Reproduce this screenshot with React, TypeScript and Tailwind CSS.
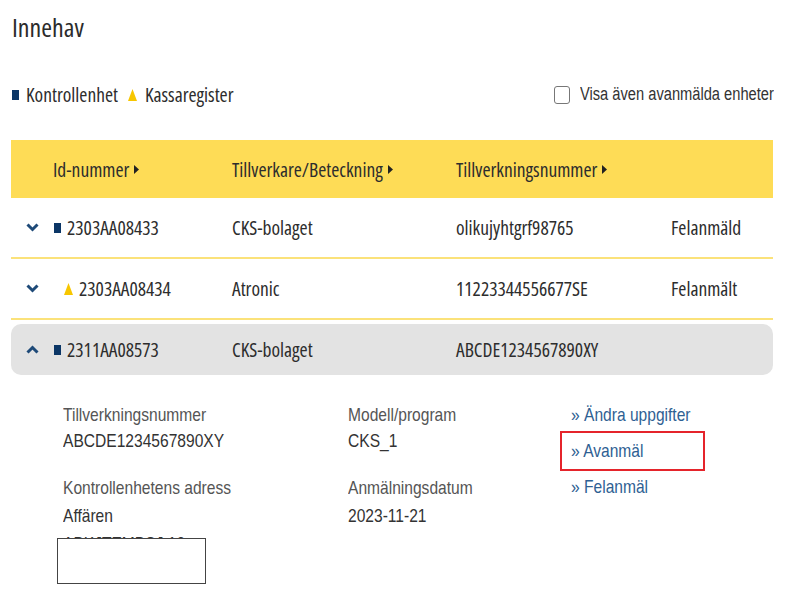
import React from "react";

const Chevron = ({ up }: { up?: boolean }) => (
  <svg width="13" height="9" viewBox="0 0 13 9" className="block">
    <path
      d={up ? "M1.5 7.5 L6.5 2.5 L11.5 7.5" : "M1.5 1.5 L6.5 6.5 L11.5 1.5"}
      fill="none"
      stroke="#1e4a78"
      strokeWidth="3"
    />
  </svg>
);

const Square = () => <span className="inline-block w-[7px] h-[10px] bg-[#0b3666]" />;
const Triangle = () => (
  <svg width="9" height="12" viewBox="0 0 9 12" className="inline-block">
    <path d="M4.5 0 L9 12 L0 12 Z" fill="#f7c600" />
  </svg>
);
const Caret = () => (
  <svg width="5" height="9" viewBox="0 0 5 9" className="inline-block ml-[5px]">
    <path d="M0 0 L5 4.5 L0 9 Z" fill="#222" />
  </svg>
);

const os = "font-['Open_Sans',sans-serif] font-stretch-[75%]";
const ar = "font-['Liberation_Sans',Arial,sans-serif]";

const N = ({ children, c = "" }: { children: React.ReactNode; c?: string }) => (
  <div className={`whitespace-nowrap ${c}`}>
    <span className="inline-block origin-left scale-x-[0.82]">{children}</span>
  </div>
);

export default function App() {
  const rows = [
    { id: "2303AA08433", type: "sq", m: "CKS-bolaget", s: "olikujyhtgrf98765", st: "Felanmäld" },
    { id: "2303AA08434", type: "tri", m: "Atronic", s: "11223344556677SE", st: "Felanmält" },
  ];
  return (
    <div className="w-[795px] h-[590px] bg-white text-[#333] overflow-hidden relative">
      <div className="pl-[12px] pr-[22px]">
        <h1 className={`${os} text-[26px] leading-none pt-[14px] text-[#2b2b2b]`}>Innehav</h1>
        <div className="flex items-center justify-between mt-[40px]">
          <div className={`${os} flex items-center text-[19.5px] text-[#2d2d2d]`}>
            <Square />
            <span className="ml-[7px]">Kontrollenhet</span>
            <span className="ml-[10px] flex items-center"><Triangle /></span>
            <span className="ml-[8px]">Kassaregister</span>
          </div>
          <label className="flex items-center">
            <span className="w-[16px] h-[18px] border border-[#777] rounded-[3px] bg-white" />
            <span className={`${ar} text-[18px] ml-[10px] w-[193px] whitespace-nowrap text-[#333]`}>
              <span className="inline-block origin-left scale-x-[0.815]">Visa även avanmälda enheter</span>
            </span>
          </label>
        </div>
      </div>

      <div className={`${os} mx-[11px] w-[762px] mt-[31px] text-[19.5px] text-[#2d2d2d]`}>
        <div className="grid grid-cols-[42px_179px_224px_215px_1fr] items-center h-[58px] bg-[#fedc56]">
          <div />
          <div className="flex items-center">Id-nummer<Caret /></div>
          <div className="flex items-center">Tillverkare/Beteckning<Caret /></div>
          <div className="flex items-center">Tillverkningsnummer<Caret /></div>
          <div />
        </div>
        {rows.map((r) => (
          <div key={r.id} className="grid grid-cols-[42px_179px_224px_215px_1fr] items-center h-[61px] border-b-2 border-[#fbe27a]">
            <div className="pl-[15px]"><Chevron /></div>
            <div className="flex items-center">
              {r.type === "sq" ? <span className="ml-[1px] mr-[6px] flex"><Square /></span> : <span className="ml-[11px] mr-[6px] flex"><Triangle /></span>}
              {r.id}
            </div>
            <div>{r.m}</div>
            <div>{r.s}</div>
            <div>{r.st}</div>
          </div>
        ))}
        <div className="grid grid-cols-[42px_179px_224px_215px_1fr] items-center h-[51px] mt-[4px] bg-[#e3e3e3] rounded-[10px]">
          <div className="pl-[15px]"><Chevron up /></div>
          <div className="flex items-center">
            <span className="ml-[1px] mr-[6px] flex"><Square /></span>2311AA08573
          </div>
          <div>CKS-bolaget</div>
          <div>ABCDE1234567890XY</div>
          <div />
        </div>
      </div>

      <div className={`${ar} relative grid grid-cols-[285px_223px_1fr] pl-[63px] mt-[27px] text-[19px] leading-[26px] text-[#333]`}>
        <div>
          <N c="text-[#555]">Tillverkningsnummer</N>
          <N>ABCDE1234567890XY</N>
          <N c="text-[#555] mt-[21px]">Kontrollenhetens adress</N>
          <N c="mt-[2px]">Affären</N>
          <N c="mt-[2px]">ABKJTEMBSJ 12</N>
        </div>
        <div>
          <N c="text-[#555]">Modell/program</N>
          <N>CKS_1</N>
          <N c="text-[#555] mt-[21px]">Anmälningsdatum</N>
          <N c="mt-[2px]">2023-11-21</N>
        </div>
        <div className="text-[#2f5f93]">
          <N>» Ändra uppgifter</N>
          <div className="mt-[10px] relative">
            <N>» Avanmäl</N>
            <span className="absolute -left-[11px] -top-[7px] w-[145px] h-[40px] border-2 border-[#e5242b]" />
          </div>
          <N c="mt-[10px]">» Felanmäl</N>
        </div>
        <span className="absolute left-[57px] top-[136px] w-[149px] h-[46px] bg-white border border-[#444]" />
      </div>
    </div>
  );
}
